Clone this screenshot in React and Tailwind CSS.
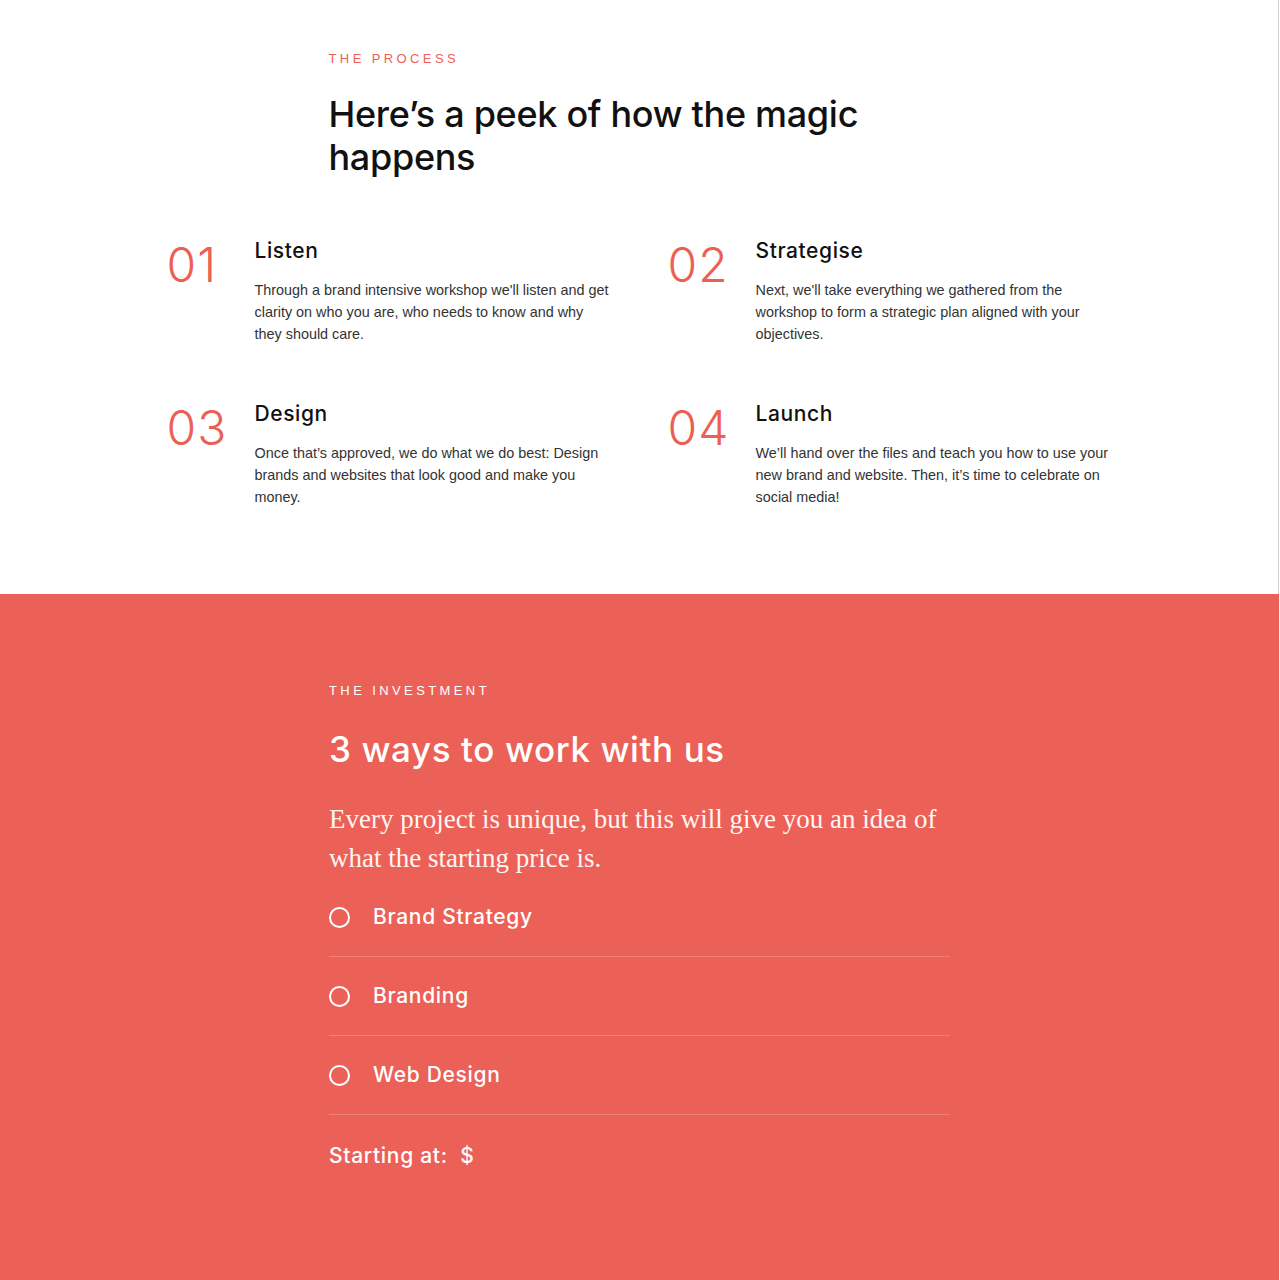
const STEPS = [
  {
    num: "01",
    title: "Listen",
    text: "Through a brand intensive workshop we'll listen and get clarity on who you are, who needs to know and why they should care.",
  },
  {
    num: "02",
    title: "Strategise",
    text: "Next, we'll take everything we gathered from the workshop to form a strategic plan aligned with your objectives.",
  },
  {
    num: "03",
    title: "Design",
    text: "Once that’s approved, we do what we do best: Design brands and websites that look good and make you money.",
  },
  {
    num: "04",
    title: "Launch",
    text: "We’ll hand over the files and teach you how to use your new brand and website. Then, it’s time to celebrate on social media!",
  },
];

const OPTIONS = ["Brand Strategy", "Branding", "Web Design"];

const sans = "font-['Inter',sans-serif]";
const body = "font-['Liberation_Sans',Arial,sans-serif]";

export default function App() {
  return (
    <div className="min-h-screen w-full bg-white">
      {/* process */}
      <section className="w-[1279px] border-r border-[#d4d4d4] bg-white pt-[49px] pb-[86px]">
        <div className="mx-auto w-[621px]">
          <p className={`${body} text-[13px] leading-[20px] tracking-[3.4px] text-[#ec5f55]`}>
            THE PROCESS
          </p>
          <h2 className={`${sans} mt-[24px] text-[36px] leading-[43px] font-medium tracking-[-0.3px] text-[#111]`}>
            Here’s a peek of how the magic happens
          </h2>
        </div>

        <div className="mx-auto mt-[58px] grid w-[945px] grid-cols-2 gap-x-[57px] gap-y-[55px]">
          {STEPS.map((s) => (
            <div key={s.num} className="flex">
              <div className={`${sans} w-[88px] shrink-0 pt-[1px] text-[48px] leading-[54px] font-light tracking-[1px] text-[#ec5f55]`}>
                {s.num}
              </div>
              <div className="flex-1">
                <h3 className={`${sans} text-[21px] leading-[28px] font-medium tracking-[0.6px] text-[#111]`}>
                  {s.title}
                </h3>
                <p className={`${body} mt-[14px] text-[14.4px] leading-[22px] text-[#333]`}>
                  {s.text}
                </p>
              </div>
            </div>
          ))}
        </div>
      </section>

      {/* investment */}
      <section className="w-[1279px] bg-[#ec6157] pt-[87px] pb-[110px] text-white">
        <div className="mx-auto w-[621px]">
          <p className={`${body} text-[13px] leading-[20px] tracking-[3.4px]`}>
            THE INVESTMENT
          </p>
          <h2 className={`${sans} mt-[28px] text-[35px] leading-[40px] font-medium tracking-[0.6px]`}>
            3 ways to work with us
          </h2>
          <p className="mt-[31px] font-['Liberation_Serif',serif] text-[27px] leading-[39px] text-[#fff5f3]">
            Every project is unique, but this will give you an idea of what the starting price is.
          </p>

          <div>
            {OPTIONS.map((o) => (
              <label
                key={o}
                className="flex h-[79px] cursor-pointer items-center border-b border-white/20"
              >
                <span className="h-[21px] w-[21px] shrink-0 rounded-full border-2 border-white" />
                <span className={`${sans} ml-[23px] text-[21px] font-medium tracking-[0.7px]`}>{o}</span>
              </label>
            ))}
          </div>

          <p className={`${sans} mt-[27px] text-[21px] leading-[28px] font-medium tracking-[0.7px]`}>
            Starting at:&nbsp; $
          </p>
        </div>
      </section>
    </div>
  );
}
